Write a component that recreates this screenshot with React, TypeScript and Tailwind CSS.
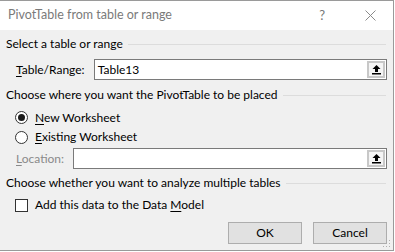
import React from 'react';

const UploadIcon = () => (
  <svg width="11" height="11" viewBox="0 0 11 11">
    <path d="M5.5 1 L9.5 5 L7 5 L7 8 L4 8 L4 5 L1.5 5 Z" fill="#000" />
    <rect x="1" y="9" width="9" height="1.5" fill="#000" />
  </svg>
);

const RefInput = ({ width, value }: { width: string; value?: string }) => (
  <div className={`flex h-[21px] ${width} items-stretch border border-[#7a7a7a] bg-white`}>
    <div className="flex flex-1 items-center pl-[3px] text-[12px] text-black">{value}</div>
    <div className="my-[1px] mr-[1px] flex w-[18px] items-center justify-center border-2 border-[#c8c8c8] bg-[#f5f5f5]">
      <UploadIcon />
    </div>
  </div>
);

const SectionHeader = ({ title }: { title: string }) => (
  <div className="flex h-[16px] items-center">
    <span className="text-[12px] leading-[16px] text-black">{title}</span>
    <div className="ml-[5px] mr-[1px] h-px flex-1 bg-[#dcdcdc]" />
  </div>
);

const Radio = ({ checked }: { checked?: boolean }) => (
  <span className="flex h-[13px] w-[13px] items-center justify-center rounded-full border border-[#333] bg-white">
    {checked && <span className="h-[7px] w-[7px] rounded-full bg-[#1a1a1a]" />}
  </span>
);

export default function App() {
  return (
    <div
      className="h-[252px] w-[395px] bg-white"
      style={{ fontFamily: 'Lato, "Noto Sans", Arial, sans-serif' }}
    >
      <div className="relative flex h-[251px] w-[394px] flex-col border-r border-b border-t border-[#9a9a9a] bg-[#f0f0f0]">
        <div className="flex h-[29px] shrink-0 items-center bg-white pl-[8px]">
          <span className="flex-1 text-[12.5px] text-[#7a7a7a]">PivotTable from table or range</span>
          <span className="mr-[40px] text-[13px] text-[#777]">?</span>
          <svg width="11" height="11" viewBox="0 0 11 11" className="mr-[17px]">
            <path d="M0.5 0.5 L10.5 10.5 M10.5 0.5 L0.5 10.5" stroke="#8a8a8a" strokeWidth="1" />
          </svg>
        </div>

        <div className="flex flex-col px-[6px]">
          <div className="mt-[6px]">
            <SectionHeader title="Select a table or range" />
          </div>

          <div className="mt-[7px] flex items-center">
            <span className="w-[88px] pl-[10px] text-[12px] text-black">
              <u className="underline-offset-2">T</u>able/Range:
            </span>
            <RefInput width="w-[294px]" value="Table13" />
          </div>

          <div className="mt-[7px]">
            <SectionHeader title="Choose where you want the PivotTable to be placed" />
          </div>

          <div className="mt-[5px] flex h-[19px] items-center pl-[9px]">
            <Radio checked />
            <span className="ml-[7px] text-[12px] text-black">
              <u className="underline-offset-2">N</u>ew Worksheet
            </span>
          </div>
          <div className="flex h-[20px] items-center pl-[9px]">
            <Radio />
            <span className="ml-[7px] text-[12px] text-black">
              <u className="underline-offset-2">E</u>xisting Worksheet
            </span>
          </div>

          <div className="mt-[1px] flex items-center">
            <span className="w-[67px] pl-[10px] text-[12px] text-[#8a8a8a]">
              <u className="underline-offset-2">L</u>ocation:
            </span>
            <RefInput width="w-[315px]" />
          </div>

          <div className="mt-[6px]">
            <SectionHeader title="Choose whether you want to analyze multiple tables" />
          </div>

          <div className="mt-[4px] flex h-[20px] items-center pl-[9px]">
            <span className="h-[13px] w-[13px] border border-[#333] bg-white" />
            <span className="ml-[7px] text-[12px] text-black">
              Add this data to the Data <u className="underline-offset-2">M</u>odel
            </span>
          </div>

          <div className="mt-[7px] flex justify-end gap-[11px] pr-[0px]">
            <button className="h-[22px] w-[74px] border border-[#adadad] bg-[#e1e1e1] text-[12px] text-black">
              OK
            </button>
            <button className="h-[22px] w-[74px] border border-[#adadad] bg-[#e1e1e1] text-[12px] text-black">
              Cancel
            </button>
          </div>
        </div>

        <svg width="8" height="8" viewBox="0 0 8 8" className="absolute bottom-[2px] right-[2px]">
          <rect x="6" y="0" width="1" height="1" fill="#b0b0b0" />
          <rect x="3" y="3" width="1" height="1" fill="#b0b0b0" />
          <rect x="6" y="3" width="1" height="1" fill="#b0b0b0" />
          <rect x="0" y="6" width="1" height="1" fill="#b0b0b0" />
          <rect x="3" y="6" width="1" height="1" fill="#b0b0b0" />
          <rect x="6" y="6" width="1" height="1" fill="#b0b0b0" />
        </svg>
      </div>
    </div>
  );
}
